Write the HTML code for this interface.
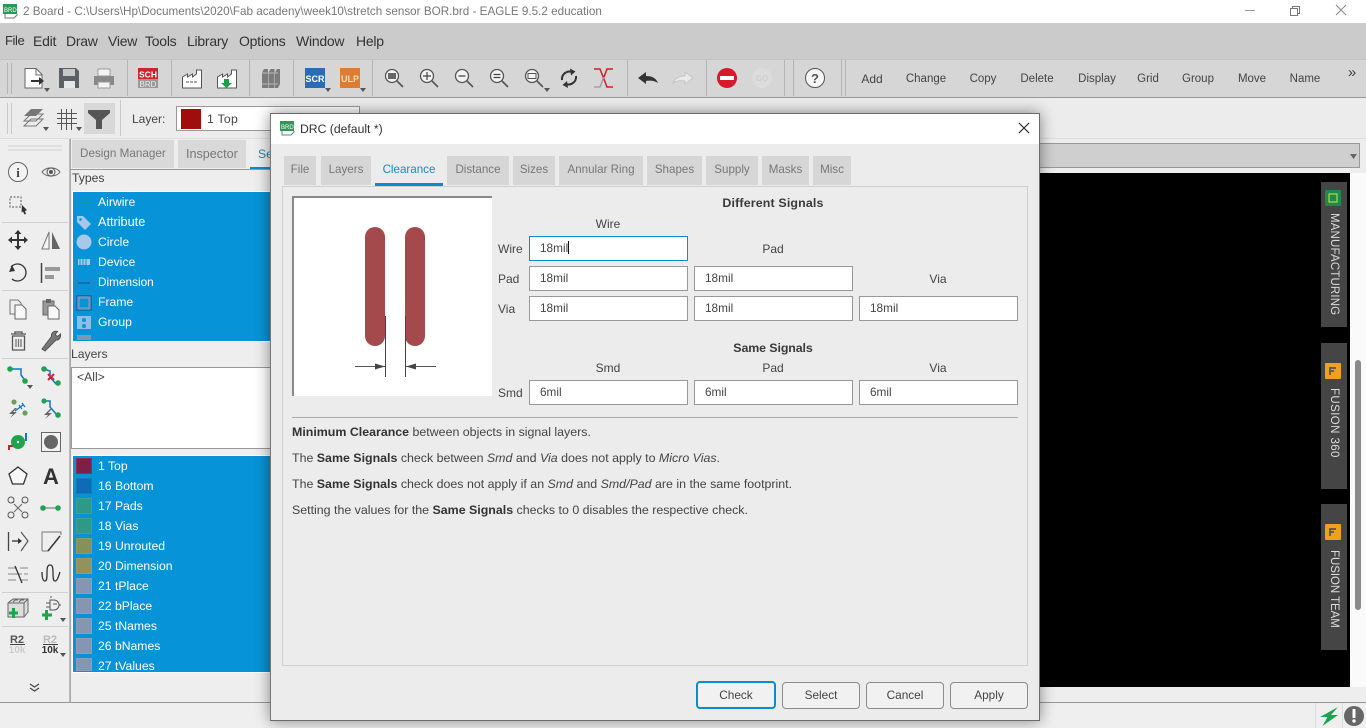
<!DOCTYPE html>
<html><head><meta charset="utf-8"><title>EAGLE DRC</title>
<style>
html,body{margin:0;padding:0;width:1366px;height:728px;overflow:hidden;background:#eee}
body{position:relative;font-family:"Liberation Sans",sans-serif;font-size:12.2px;color:#444}
div,span.a{position:absolute}
.t{position:absolute;white-space:nowrap;line-height:16px;height:16px}
.c{transform:translateX(-50%)}
.w{color:#fff}
.m{font-family:"Liberation Sans",sans-serif;font-size:14px;color:#333;letter-spacing:-.25px}
.k{font-size:11.5px}
.d{font-size:12.4px}
.l{font-size:12px}
.sw{width:16px;height:16px;left:76px;box-shadow:inset 0 0 0 1px rgba(255,255,255,.08)}
.tab{background:#d6d6d6;height:29px;top:42px;color:#777;line-height:28px;text-align:center;font-size:11.6px}
.inp{background:#fff;border:1px solid #999;height:23px;width:157px;box-sizing:content-box;line-height:23px;text-indent:10px;color:#444;font-size:11.8px}
.btn{top:568px;height:25px;line-height:25px;width:76px;background:#f1f1f1;border:1px solid #8b8b8b;border-radius:4px;text-align:center;color:#444;font-size:11.8px}
.vt{left:1321px;width:26px;background:#454545}
.vl{position:absolute;left:6px;writing-mode:vertical-rl;color:#ddd;font-family:"Liberation Sans",sans-serif;font-size:11.5px;letter-spacing:.15px;line-height:14px;white-space:nowrap}
.h{font-weight:bold;color:#3a3a3a;font-size:12.4px}
i{font-style:italic}
b{color:#333}
</style></head><body>
<!-- bars -->
<div style="left:0;top:0;width:1366px;height:23px;background:#fff"></div>
<div style="left:0;top:23px;width:1366px;height:36px;background:#cbcbcb"></div>
<div style="left:0;top:59px;width:1366px;background:#d6d6d6;border-top:1px solid #c2c2c2;border-bottom:1px solid #999;box-sizing:content-box;height:37px"></div>
<div style="left:0;top:98px;width:1366px;height:40px;background:#ececec;border-bottom:1px solid #ddd"></div>
<div style="left:0;top:139px;width:1366px;height:563px;background:#eee"></div>
<div style="left:1039px;top:143px;width:321px;height:25px;background:#cfcfcf;border:1px solid #999;box-sizing:border-box"></div>
<div style="left:1039px;top:173px;width:311px;height:514px;background:#000"></div>
<div style="left:1350px;top:173px;width:16px;height:529px;background:#fafafa"></div>
<div style="left:1355px;top:360px;width:6px;height:250px;background:#8a8a8a;border-radius:3px"></div>
<div style="left:0;top:702px;width:1366px;height:1px;background:#999"></div>
<div style="left:0;top:703px;width:1366px;height:25px;background:#efefef"></div>
<div style="left:1039px;top:687px;width:327px;height:15px;background:#eee"></div>
<div style="left:1315px;top:703px;width:1px;height:25px;background:#ddd"></div>
<div style="left:1342px;top:703px;width:1px;height:25px;background:#ddd"></div>

<!-- title -->
<span class="t" style="left:23px;top:4px;color:#777;font-size:11.7px">2 Board - C:\Users\Hp\Documents\2020\Fab acadeny\week10\stretch sensor BOR.brd - EAGLE 9.5.2 education</span>
<!-- menu -->
<span class="t m" style="left:5px;top:33px;font-size:13px;letter-spacing:-.4px">File</span>
<span class="t m" style="left:33px;top:33px">Edit</span>
<span class="t m" style="left:66px;top:33px">Draw</span>
<span class="t m" style="left:108px;top:33px">View</span>
<span class="t m" style="left:145px;top:33px">Tools</span>
<span class="t m" style="left:187px;top:33px">Library</span>
<span class="t m" style="left:239px;top:33px">Options</span>
<span class="t m" style="left:296px;top:33px">Window</span>
<span class="t m" style="left:356px;top:33px">Help</span>
<!-- toolbar text -->
<span class="t c k" style="left:872px;top:71px;font-size:12px">Add</span>
<span class="t c k" style="left:926px;top:71px">Change</span>
<span class="t c k" style="left:983px;top:71px">Copy</span>
<span class="t c k" style="left:1037px;top:71px">Delete</span>
<span class="t c k" style="left:1097px;top:71px">Display</span>
<span class="t c k" style="left:1148px;top:71px">Grid</span>
<span class="t c k" style="left:1198px;top:71px">Group</span>
<span class="t c k" style="left:1252px;top:71px">Move</span>
<span class="t c k" style="left:1305px;top:71px">Name</span>
<span class="t c" style="left:1352px;top:65px;font-size:15px">»</span>
<!-- second toolbar -->
<div style="left:84px;top:103px;width:31px;height:31px;background:#d8d8d8"></div>
<span class="t l" style="left:132px;top:111px">Layer:</span>
<div style="left:176px;top:106px;width:184px;height:25px;background:#fff;border:1px solid #999;box-sizing:border-box"></div>
<div style="left:181px;top:109px;width:20px;height:20px;background:#a00d0d"></div>
<span class="t" style="left:207px;top:111px;letter-spacing:.3px">1 Top</span>

<!-- left panel -->
<div style="left:72px;top:140px;width:102px;height:28px;background:#d9d9d9"></div>
<div style="left:178px;top:140px;width:68px;height:28px;background:#d9d9d9"></div>
<span class="t" style="left:80px;top:146px;color:#777;font-size:11.7px">Design Manager</span>
<span class="t" style="left:186px;top:146px;color:#777;font-size:12.6px">Inspector</span>
<span class="t" style="left:258px;top:146px;color:#1a87c4">Select</span>
<div style="left:250px;top:167px;width:30px;height:3px;background:#0d8ccc"></div>
<div style="left:70px;top:169px;width:210px;height:1px;background:#999"></div>
<div style="left:70px;top:139px;width:1px;height:563px;background:#aaa"></div>
<span class="t" style="left:72px;top:170px;color:#444">Types</span>
<div style="left:72px;top:191px;width:210px;height:151px;background:#0793d8;border:1px solid #fff;box-sizing:border-box;overflow:hidden"></div>
<span class="t w" style="left:98px;top:194px">Airwire</span>
<span class="t w" style="left:98px;top:214px;font-size:12.7px">Attribute</span>
<span class="t w" style="left:98px;top:234px">Circle</span>
<span class="t w" style="left:98px;top:254px">Device</span>
<span class="t w" style="left:98px;top:274px;font-size:11.8px">Dimension</span>
<span class="t w" style="left:98px;top:294px">Frame</span>
<span class="t w" style="left:98px;top:314px">Group</span>
<span class="t" style="left:71px;top:346px">Layers</span>
<div style="left:71px;top:367px;width:210px;height:82px;background:#fff;border:1px solid #999;box-sizing:border-box"></div>
<span class="t" style="left:77px;top:369px">&lt;All&gt;</span>
<div style="left:72px;top:455px;width:210px;height:218px;background:#0793d8;border:1px solid #fff;box-sizing:border-box"></div>
<div class="sw" style="top:458px;background:#7d2045"></div>
<div class="sw" style="top:478px;background:#0d6cb5"></div>
<div class="sw" style="top:498px;background:#2e9a85"></div>
<div class="sw" style="top:518px;background:#2e9a85"></div>
<div class="sw" style="top:538px;background:#84925a"></div>
<div class="sw" style="top:558px;background:#93915c"></div>
<div class="sw" style="top:578px;background:#8496b0"></div>
<div class="sw" style="top:598px;background:#8496b0"></div>
<div class="sw" style="top:618px;background:#8496b0"></div>
<div class="sw" style="top:638px;background:#8496b0"></div>
<div class="sw" style="top:658px;height:13px;background:#8496b0"></div>
<span class="t w" style="left:98px;top:458px">1 Top</span>
<span class="t w" style="left:98px;top:478px">16 Bottom</span>
<span class="t w" style="left:98px;top:498px">17 Pads</span>
<span class="t w" style="left:98px;top:518px">18 Vias</span>
<span class="t w" style="left:98px;top:538px">19 Unrouted</span>
<span class="t w" style="left:98px;top:558px">20 Dimension</span>
<span class="t w" style="left:98px;top:578px">21 tPlace</span>
<span class="t w" style="left:98px;top:598px">22 bPlace</span>
<span class="t w" style="left:98px;top:618px">25 tNames</span>
<span class="t w" style="left:98px;top:638px">26 bNames</span>
<div style="left:98px;top:658px;width:100px;height:14px;overflow:hidden"><span class="t w" style="left:0;top:0">27 tValues</span></div>

<!-- right tabs -->
<div class="vt" style="top:182px;height:145px"><span class="vl" style="top:31px">MANUFACTURING</span></div>
<div class="vt" style="top:343px;height:146px"><span class="vl" style="top:45px;letter-spacing:.4px">FUSION 360</span></div>
<div class="vt" style="top:504px;height:146px"><span class="vl" style="top:46px;letter-spacing:-.05px">FUSION TEAM</span></div>

<!-- icons layer -->
<svg style="position:absolute;left:0;top:0" width="1366" height="728" viewBox="0 0 1366 728" fill="none">
<!-- title bar icon -->
<rect x="3" y="4" width="14" height="10" fill="#2a9a55"/><path d="M5 14v4h9l3-3v-1" stroke="#777"/><text x="4" y="12" font-size="6" fill="#fff" font-family="Liberation Sans">BRD</text>
<!-- window controls -->
<path d="M1245 10.500h10" stroke="#999"/><rect x="1290.500" y="8.500" width="7" height="7" stroke="#777"/><path d="M1292.500 8.500v-2h7v7h-2" stroke="#777"/><path d="M1336 5l10 10M1346 5l-10 10" stroke="#888"/>
<!-- separators -->
<g stroke="#b5b5b5"><path d="M7.500 63v31M11.500 63v31M127.500 60v36M171.500 60v36M249.500 60v36M293.500 60v36M372.500 60v36M627.500 60v36M706.500 60v36M784.500 60v36M793.500 60v36M841.500 60v36M845.500 60v36"/></g>
<g stroke="#c9c9c9"><path d="M7.500 103v31M11.500 103v31M120.500 100v36"/></g>
<g stroke="#d0d0d0"><path d="M8 146h54M8 150h54M2 222.500h66M2 290.500h66M2 358.500h66M2 592.500h66M2 626.500h66"/></g>
<path d="M69.500 139v563" stroke="#bbb"/>
<!-- new -->
<path d="M25 68.500h11l6 6V88H25z" fill="#fff" stroke="#666"/><path d="M36 69v6h6" stroke="#666"/><path d="M31 81h10" stroke="#333" stroke-width="2"/><path d="M39 77l5 4-5 4z" fill="#333"/><path d="M44 88h6l-3 4z" fill="#555"/>
<!-- save -->
<path d="M59 68h17l3 3v17H59z" fill="#5b6066"/><rect x="63" y="69" width="12" height="7" fill="#c8c8c8"/><rect x="64" y="81" width="11" height="7" fill="#e6e6e6"/>
<!-- print -->
<rect x="94" y="76" width="20" height="9" fill="#888"/><rect x="98" y="69" width="12" height="7" fill="#f4f4f4" stroke="#999"/><rect x="98" y="82" width="12" height="6" fill="#f4f4f4" stroke="#999"/>
<!-- sch brd -->
<rect x="138" y="68" width="20" height="11" fill="#c8262c"/><rect x="138" y="79" width="20" height="9" fill="#999"/>
<text x="148" y="77.500" font-size="8.500" font-weight="bold" fill="#fff" text-anchor="middle" font-family="Liberation Sans">SCH</text><text x="148" y="87" font-size="8" fill="#eee" text-anchor="middle" font-family="Liberation Sans">BRD</text>
<!-- factory -->
<path d="M182.500 88v-11l5 -3v3l5-3v3l4-3v-4h5v18z" fill="#fff" stroke="#555"/><path d="M186 82h3M190 82h3M194 82h3" stroke="#555"/>
<path d="M217.500 88v-11l5 -3v3l5-3v3l4-3v-4h5v18z" fill="#fff" stroke="#555"/><path d="M224 79h5v4h3l-5.500 5-5.500-5h3z" fill="#18a048"/>
<!-- books -->
<path d="M262 72.500l2-3.500h4v19h-6zM268.500 72.500l2-3.500h4v19h-6zM275 72.500l2-3.500h3v15l-2 4h-3z" fill="#7b7b7b"/><path d="M262 73h5.500M268.500 73h5.500M275 73h3M262 84h5.500M268.500 84h5.500M275 84h3" stroke="#bbb"/>
<!-- scr / ulp -->
<rect x="305" y="68" width="20" height="20" fill="#2b6db5"/><text x="315" y="82" font-size="9" font-weight="bold" fill="#fff" text-anchor="middle" font-family="Liberation Sans">SCR</text><path d="M325 88h6l-3 4z" fill="#555"/>
<rect x="340" y="68" width="20" height="20" fill="#dd7d33"/><text x="350" y="82" font-size="9" font-weight="bold" fill="#ffd9b0" text-anchor="middle" font-family="Liberation Sans">ULP</text><path d="M360 88h6l-3 4z" fill="#555"/>
<!-- zooms -->
<g stroke="#555" stroke-width="1.300" fill="#f3f3f3">
<circle cx="392" cy="76" r="6.500"/><circle cx="427" cy="76" r="6.500"/><circle cx="462" cy="76" r="6.500"/><circle cx="497" cy="76" r="6.500"/><circle cx="532" cy="76" r="6.500"/>
</g>
<g stroke="#555" stroke-width="1.600"><path d="M397 81l6 6M432 81l6 6M467 81l6 6M502 81l6 6M537 81l6 6"/></g>
<rect x="388" y="73" width="8" height="6" fill="#666"/>
<path d="M423 76h8M427 72v8M458.500 76h7M493.500 74.500h7M493.500 77.500h7" stroke="#444" stroke-width="1.200"/>
<rect x="528" y="73.500" width="8" height="5" stroke="#555"/><path d="M544 88h6l-3 4z" fill="#555"/>
<!-- refresh -->
<path d="M562 80a7.500 7.500 0 0 1 10-8M576 76a7.500 7.500 0 0 1-10 8" stroke="#333" stroke-width="2"/><path d="M570 68.500l5.500 3-4.500 4zM568 88l-5.500-3 4.500-4z" fill="#333"/>
<!-- ripup -->
<path d="M594 69h6l7 18h6" stroke="#d01f2c" stroke-width="1.500"/><path d="M613 69h-6l-7 18h-6" stroke="#999" stroke-width="1.300"/><path d="M613 69h-6l-3 8" stroke="#d01f2c" stroke-width="1.500"/>
<!-- undo/redo -->
<path d="M638 78l8-6v4c6 0 10 2 12 7-3-2-7-3-12-2v3z" fill="#333"/><path d="M693 78l-8-6v4c-6 0-10 2-12 7 3-2 7-3 12-2v3z" fill="#eaeaea" stroke="#c6c6c6"/>
<!-- stop go -->
<circle cx="727" cy="78" r="10" fill="#d9182c"/><rect x="720" y="76" width="14" height="4" fill="#fff"/>
<circle cx="762" cy="78" r="10" fill="#dcdcdc"/><text x="762" y="81" font-size="8" fill="#cfcfcf" text-anchor="middle" font-weight="bold" font-family="Liberation Sans">GO</text>
<circle cx="815" cy="78" r="9.500" fill="#f6f6f6" stroke="#555"/><text x="815" y="83" font-size="13" font-weight="bold" fill="#555" text-anchor="middle" font-family="Liberation Sans">?</text>
<!-- layer tools -->
<path d="M24 116l7-7h12l-7 7z" fill="#777"/><path d="M24 121l7-7h12l-7 7zM24 126l7-7h12l-7 7z" stroke="#777"/><path d="M43 127h6l-3 4z" fill="#555"/>
<path d="M61.500 109v21M66.500 109v21M71.500 109v21M57 113.500h20M57 118.500h20M57 123.500h20" stroke="#555"/><path d="M76 127h6l-3 4z" fill="#555"/>
<path d="M88 110h22v3l-8 7v9h-6v-9l-8-7z" fill="#555"/>
<!-- combo drop arrow -->
<path d="M1350 154h7l-3.500 5z" fill="#666"/>
<!-- left icons -->
<circle cx="18" cy="172" r="9.500" fill="#f4f4f4" stroke="#666"/><text x="18" y="177" font-size="13" font-weight="bold" fill="#444" text-anchor="middle" font-family="Liberation Serif">i</text>
<path d="M42 172c4-5.500 14-5.500 18 0-4 5.500-14 5.500-18 0z" stroke="#666"/><circle cx="51" cy="172" r="4" stroke="#555"/><circle cx="51" cy="172" r="2" fill="#555"/>
<rect x="10" y="197" width="11" height="10" stroke="#555" stroke-dasharray="2 1.500"/><path d="M22 205l5 5-2 1 1 3-1.500.5-1.500-3-1.500 1z" fill="#333"/>
<!-- move -->
<path d="M18 231v18M9 240h18" stroke="#333" stroke-width="2"/><path d="M18 230l-3.500 4h7zM18 250l-3.500-4h7zM8 240l4-3.500v7zM28 240l-4-3.500v7z" fill="#333"/>
<path d="M42 249l7-17v17z" fill="#f4f4f4" stroke="#777"/><path d="M52 232l8 17h-8z" fill="#666"/>
<!-- rotate/align -->
<path d="M11 267a8.500 8.500 0 1 1 1 12" stroke="#333" stroke-width="1.300"/><path d="M9 272l3-7 3 6z" fill="#333"/>
<path d="M41.500 263v20" stroke="#444" stroke-width="1.500"/><rect x="45" y="267" width="15" height="4" fill="#999"/><rect x="45" y="275" width="9" height="4" fill="#999"/>
<!-- copy / paste -->
<path d="M10 300h8l3 3v11h-11z" fill="#eee" stroke="#777"/><path d="M15 305h7l4 4v10H15z" fill="#f8f8f8" stroke="#666"/>
<path d="M43 301h11v14H43z" fill="#999" stroke="#666"/><path d="M46 299h5v4h-5z" fill="#666"/><path d="M48 306h7l4 4v9H48z" fill="#f8f8f8" stroke="#666"/>
<!-- trash wrench -->
<path d="M11 334h15M15 334v-2h7v2M12.500 336h12v14h-12z" stroke="#555" stroke-width="1.300"/><path d="M16 339v8M18.500 339v8M21 339v8" stroke="#777" stroke-width="1.300"/>
<path d="M42 349l3 2 11-11c3 0 5-2 4.500-6l-3 2.500-2.500-2 2.500-3c-4-1-6.500 1.500-6 5z" fill="#777" stroke="#555"/>
<!-- route -->
<path d="M10 369h11l0 6 6 8" stroke="#1473cc" stroke-width="1.500"/><circle cx="10" cy="369" r="2.800" fill="#1fa34f"/><circle cx="25" cy="381" r="2.800" fill="#1fa34f"/><path d="M27 385h6l-3 4z" fill="#555"/>
<path d="M44 369l6 2v6l6 7" stroke="#1473cc" stroke-width="1.500"/><circle cx="44" cy="369" r="2.800" fill="#1fa34f"/><circle cx="58" cy="383" r="2.800" fill="#1fa34f"/><path d="M48 374l6 6M54 374l-6 6" stroke="#e01c33" stroke-width="2"/>
<!-- 3rd row -->
<circle cx="14" cy="402" r="2.600" fill="#6f9c60"/><circle cx="25" cy="413" r="2.600" fill="#6f9c60"/><path d="M15 411l8-6M19 405l3 4M22 403l3 4" stroke="#1473cc" stroke-width="1.300"/><path d="M15 408l-6 6h4l-3 4 7-6h-4l4-4z" fill="#666"/>
<path d="M44 401l6 0v6l7 8" stroke="#1473cc" stroke-width="1.500"/><circle cx="44" cy="401" r="2.600" fill="#1fa34f"/><circle cx="58" cy="415" r="2.800" fill="#1fa34f"/><path d="M50 409l-6 6h4l-3 4 7-6h-4l4-4z" fill="#666"/>
<!-- via -->
<path d="M9 450v-4h4" stroke="#c1272d" stroke-width="2"/><path d="M26 433v8" stroke="#1473cc" stroke-width="2"/><circle cx="18" cy="442" r="7" fill="#1fa34f"/><circle cx="18" cy="442" r="1.200" fill="#fff"/>
<rect x="41.500" y="432.500" width="19" height="19" fill="#f3f3f3" stroke="#666"/><circle cx="51" cy="442" r="7" fill="#666"/>
<!-- polygon / A -->
<path d="M18 467l9 7-3.500 10h-11L9 474z" fill="#f7f7f7" stroke="#333" stroke-width="1.300"/>
<text x="51" y="484" font-size="22" font-weight="bold" fill="#333" text-anchor="middle" font-family="Liberation Sans">A</text>
<!-- net / wire -->
<path d="M11 500l14 16M25 500l-14 16" stroke="#666"/><rect x="13" y="503" width="10" height="10" fill="#eee"/><path d="M14 504l8 8M22 504l-8 8" stroke="#666"/><circle cx="11" cy="500" r="3" fill="#eee" stroke="#555"/><circle cx="25" cy="500" r="3" fill="#eee" stroke="#555"/><circle cx="11" cy="515" r="3" fill="#eee" stroke="#555"/><circle cx="25" cy="515" r="3" fill="#eee" stroke="#555"/>
<path d="M43 508h16" stroke="#666"/><circle cx="43" cy="508" r="2.800" fill="#1fa34f"/><circle cx="58" cy="508" r="2.800" fill="#1fa34f"/>
<!-- 8th row -->
<path d="M8.500 532v19" stroke="#444" stroke-width="1.300"/><path d="M12 541h8" stroke="#333" stroke-width="1.300"/><path d="M18 538l4 3-4 3z" fill="#333"/><path d="M21 532l7 9-7 10" stroke="#555" stroke-width="1.200"/>
<path d="M42 551v-19h19v3M42 551h6" stroke="#777"/><path d="M48 551l12-15" stroke="#333" stroke-width="1.500"/>
<!-- 9th row -->
<path d="M8 568h9M8 574h14M8 580h8M20 568h8M24 574h4M20 580h8" stroke="#aaa" stroke-width="1.500"/><path d="M15 566l7 17" stroke="#333" stroke-width="1.300"/>
<path d="M42 572c0 6 1 9 3 9s2-4 2-8 0-8 3-8 3 4 3 8 0 8 2 8 3-3 5-9" stroke="#333" stroke-width="1.300"/>
<!-- add -->
<path d="M8 603l5-4h15v13l-4 5H8z" fill="#ddd" stroke="#666"/><path d="M8 603h16v14M24 603l4-4" stroke="#666"/><path d="M13 602l2-2h3M19 602l2-2h3" stroke="#666"/>
<path d="M9 613h9M13.500 608v10" stroke="#1fa34f" stroke-width="3"/>
<path d="M50 600h4a5 5 0 0 1 0 10h-4zM50 603h-4M50 607h-4M59 605h2M53 604l4 0M51 598v-2" stroke="#555"/>
<path d="M42 615h10M46.500 610v10" stroke="#1fa34f" stroke-width="3"/><path d="M60 618h6l-3 4z" fill="#555"/>
<!-- R2 -->
<text x="17" y="643" font-size="11" font-weight="bold" fill="#555" text-anchor="middle" font-family="Liberation Sans">R2</text><path d="M10 644.500h15" stroke="#444"/><text x="17" y="653" font-size="10" font-weight="bold" fill="#ccc" text-anchor="middle" font-family="Liberation Sans">10k</text>
<text x="50" y="643" font-size="11" font-weight="bold" fill="#bbb" text-anchor="middle" font-family="Liberation Sans">R2</text><path d="M43 644.500h15" stroke="#444"/><text x="50" y="653" font-size="10" font-weight="bold" fill="#333" text-anchor="middle" font-family="Liberation Sans">10k</text><path d="M60 653h6l-3 4z" fill="#555"/>
<!-- chevrons -->
<path d="M30 684l4.500 3 4.500-3M30 688l4.500 3 4.500-3" stroke="#444" stroke-width="1.200"/>
<!-- list icons -->
<path d="M77 202h15" stroke="#1c9f70" stroke-width="1.500" stroke-dasharray="5 2"/>
<path d="M77 216h6l8 8-6 6-8-8z" fill="#a9c8e8"/><circle cx="80.500" cy="219.500" r="1.300" fill="#0793d8"/>
<circle cx="84" cy="242" r="7.500" fill="#a9c8e8"/>
<rect x="78" y="259" width="12" height="6" fill="#a9c8e8"/><path d="M80 258v8M83 258v8M86 258v8" stroke="#0793d8"/>
<path d="M77 276v14M91 276v14" stroke="#3a7fb5"/><path d="M78 283h12" stroke="#0b4d85"/>
<rect x="77" y="296" width="14" height="14" fill="#0793d8" stroke="#0b4d85"/><rect x="78.500" y="297.500" width="11" height="11" stroke="#6a96c0" stroke-width="2.500"/>
<rect x="77" y="316" width="14" height="13" fill="#8cbfe6"/><circle cx="84" cy="320" r="2" fill="#0793d8"/><circle cx="84" cy="326" r="2" fill="#0793d8"/>
<rect x="77" y="335" width="14" height="5" fill="#7f95b0"/>
<!-- status -->
<path d="M1338 707L1320 717h7.500l-5 9L1338 715h-7z" fill="#18a74f"/>
<circle cx="1354" cy="716" r="10" fill="#666"/><rect x="1352.500" y="709" width="3" height="9" fill="#fff"/><circle cx="1354" cy="721" r="1.700" fill="#fff"/>
<!-- right tab icons -->
<rect x="1325" y="190" width="16" height="16" rx="1" fill="#1d8a4a"/><rect x="1329" y="194" width="8" height="8" stroke="#d6e24a"/>
<rect x="1325" y="363" width="16" height="16" rx="1" fill="#f0a020"/><path d="M1330 375v-7h6M1330 371h4" stroke="#555" stroke-width="1.700"/>
<rect x="1325" y="524" width="16" height="16" rx="1" fill="#f0a020"/><path d="M1330 536v-7h6M1330 532h4" stroke="#555" stroke-width="1.700"/>
</svg>

<!-- dialog -->
<div style="left:270px;top:113px;width:770px;height:608px;background:#ececec;border:1px solid #6a6a6a;border-left-color:#777;box-sizing:border-box;box-shadow:0 0 14px rgba(0,0,0,.45)">
 <div style="left:0;top:0;width:768px;height:30px;background:#fff"></div>
 <svg style="position:absolute;left:9px;top:7px" width="16" height="16" viewBox="0 0 16 16" fill="none"><rect x="0" y="0" width="14" height="10" fill="#2a9a55"/><path d="M2 10v4h9l3-3v-1" stroke="#777"/><text x="1" y="8" font-size="6" fill="#fff" font-family="Liberation Sans">BRD</text></svg>
 <span class="t" style="left:29px;top:7px;color:#333">DRC (default *)</span>
 <svg style="position:absolute;left:747px;top:8px" width="12" height="12" fill="none"><path d="M1 1l10 10M11 1L1 11" stroke="#222" stroke-width="1.100"/></svg>
 <div class="tab" style="left:13px;width:32px">File</div>
 <div class="tab" style="left:50px;width:50px">Layers</div>
 <div class="tab" style="left:104px;width:68px;background:transparent;color:#1a87c4">Clearance</div>
 <div style="left:104px;top:69px;width:68px;height:3px;background:#0d8ccc;z-index:2"></div>
 <div class="tab" style="left:176px;width:62px">Distance</div>
 <div class="tab" style="left:242px;width:42px">Sizes</div>
 <div class="tab" style="left:288px;width:84px">Annular Ring</div>
 <div class="tab" style="left:376px;width:55px">Shapes</div>
 <div class="tab" style="left:435px;width:52px">Supply</div>
 <div class="tab" style="left:491px;width:47px">Masks</div>
 <div class="tab" style="left:542px;width:38px">Misc</div>
 <div style="left:11px;top:72px;width:746px;height:480px;border:1px solid #cfcfcf;box-sizing:border-box"></div>
 <!-- picture -->
 <svg style="position:absolute;left:21px;top:82px" width="200" height="200" viewBox="0 0 200 200" fill="none">
  <rect width="200" height="200" fill="#fff"/><path d="M1 200V1h199" stroke="#888" stroke-width="2"/>
  <rect x="73" y="31" width="20" height="119" rx="10" fill="#a44a4c"/><rect x="113" y="31" width="20" height="119" rx="10" fill="#a44a4c"/>
  <path d="M93.500 120v61M113.500 120v61" stroke="#444"/><path d="M63 170.500h30M114 170.500h30" stroke="#555"/>
  <path d="M83 167.500l10 3-10 3zM124 167.500l-10 3 10 3z" fill="#444"/>
 </svg>
 <!-- fields -->
 <span class="t c h" style="left:502px;top:81px;letter-spacing:.16px">Different Signals</span>
 <span class="t c l" style="left:337px;top:102px">Wire</span>
 <span class="t l" style="left:227px;top:127px">Wire</span>
 <div class="inp" style="left:258px;top:122px;border-color:#0d8ccc">18mil<span style="display:inline-block;width:1px;height:13px;background:#111;vertical-align:-2px"></span></div>
 <span class="t c l" style="left:502px;top:127px">Pad</span>
 <span class="t l" style="left:227px;top:157px">Pad</span>
 <div class="inp" style="left:258px;top:152px">18mil</div>
 <div class="inp" style="left:423px;top:152px">18mil</div>
 <span class="t c l" style="left:667px;top:157px">Via</span>
 <span class="t l" style="left:227px;top:187px">Via</span>
 <div class="inp" style="left:258px;top:182px">18mil</div>
 <div class="inp" style="left:423px;top:182px">18mil</div>
 <div class="inp" style="left:588px;top:182px">18mil</div>
 <span class="t c h" style="left:502px;top:226px;letter-spacing:-.1px">Same Signals</span>
 <span class="t c l" style="left:337px;top:246px">Smd</span>
 <span class="t c l" style="left:502px;top:246px">Pad</span>
 <span class="t c l" style="left:667px;top:246px">Via</span>
 <span class="t l" style="left:227px;top:271px">Smd</span>
 <div class="inp" style="left:258px;top:266px">6mil</div>
 <div class="inp" style="left:423px;top:266px">6mil</div>
 <div class="inp" style="left:588px;top:266px">6mil</div>
 <div style="left:21px;top:303px;width:726px;height:1px;background:#aaa"></div>
 <span class="t d" style="left:21px;top:310px"><b>Minimum Clearance</b> between objects in signal layers.</span>
 <span class="t d" style="left:21px;top:336px">The <b>Same Signals</b> check between <i>Smd</i> and <i>Via</i> does not apply to <i>Micro Vias</i>.</span>
 <span class="t d" style="left:21px;top:362px">The <b>Same Signals</b> check does not apply if an <i>Smd</i> and <i>Smd/Pad</i> are in the same footprint.</span>
 <span class="t d" style="left:21px;top:388px">Setting the values for the <b>Same Signals</b> checks to 0 disables the respective check.</span>
 <div class="btn" style="left:425px;width:76px;border:2px solid #0d8ccc;height:24px;line-height:24px;top:567px">Check</div>
 <div class="btn" style="left:511px">Select</div>
 <div class="btn" style="left:595px">Cancel</div>
 <div class="btn" style="left:679px">Apply</div>
</div>
</body></html>
